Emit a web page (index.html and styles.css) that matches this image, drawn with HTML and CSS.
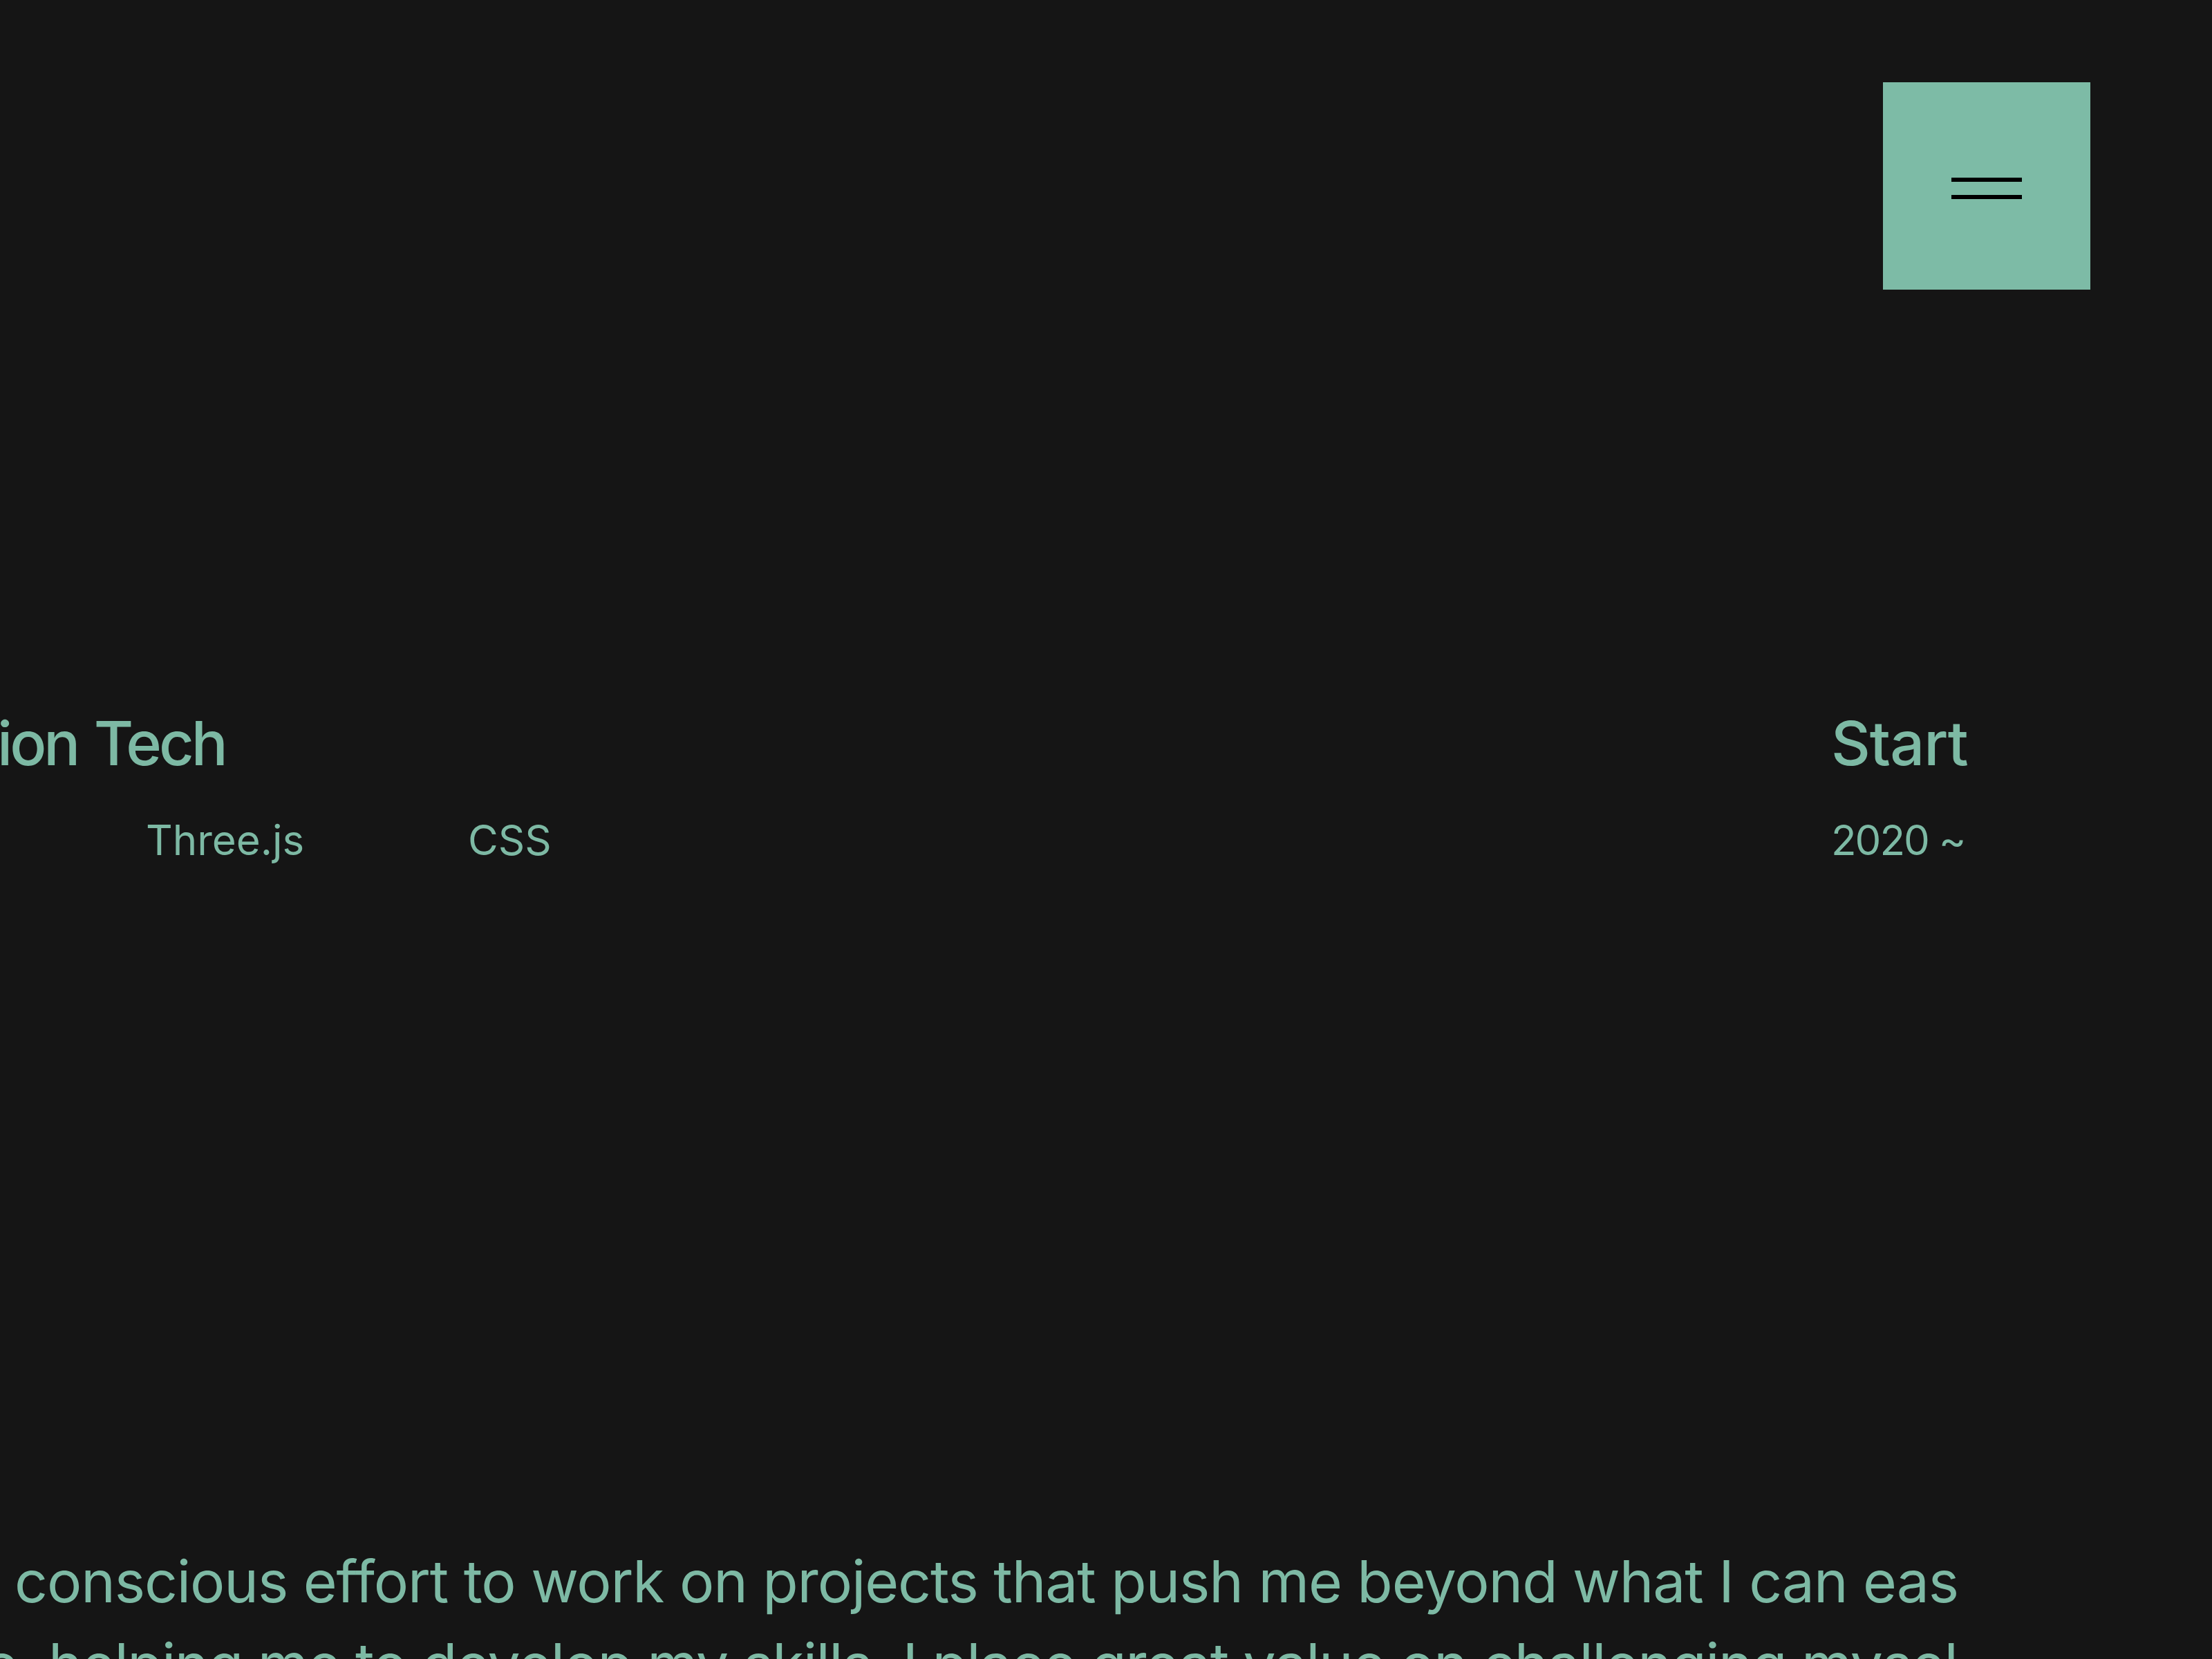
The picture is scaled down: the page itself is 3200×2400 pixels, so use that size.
FILE: index.html
```html
<!DOCTYPE html>
<html lang="en">
<head>
<meta charset="utf-8">
<title>Tech</title>
<link rel="stylesheet" href="styles.css">
</head>
<body>
<header class="topbar">
  <button class="menu-btn" aria-label="Menu">
    <span class="menu-line"></span>
    <span class="menu-line"></span>
  </button>
</header>
<section class="info-row">
  <div class="info-col tech-col">
    <h2 class="info-title">ion Tech</h2>
    <ul class="tech-list">
      <li class="tech-item">Three.js</li>
      <li class="tech-item">CSS</li>
    </ul>
  </div>
  <div class="info-col start-col">
    <h2 class="info-title">Start</h2>
    <p class="info-value">2020 ~</p>
  </div>
</section>
<section class="about">
  <p class="about-line first">conscious effort to work on projects that push me beyond what I can eas</p>
  <p class="about-line second">e, helping me to develop my skills. I place great value on challenging mysel</p>
</section>
</body>
</html>
```
FILE: styles.css
```css
html, body {
  margin: 0;
  padding: 0;
}
body {
  background: #151515;
  color: #7db9a4;
  font-family: Inter, "Liberation Sans", sans-serif;
  width: 3200px;
  height: 2400px;
  overflow: hidden;
}
.topbar {
  display: flex;
  justify-content: flex-end;
  padding: 119px 176px 0 0;
}
.menu-btn {
  width: 300px;
  height: 300px;
  background: #7dbba6;
  border: none;
  padding: 0;
  margin: 0;
  display: flex;
  flex-direction: column;
  align-items: center;
  justify-content: center;
  gap: 19px;
  padding-top: 7px;
}
.menu-line {
  display: block;
  width: 102px;
  height: 6px;
  background: #000;
}
.info-row {
  display: flex;
  justify-content: space-between;
  margin-top: 603px;
  padding-right: 344px;
}
.info-col {
  display: flex;
  flex-direction: column;
}
.info-title {
  margin: 0;
  font-size: 88px;
  line-height: 106px;
  font-weight: 500;
  letter-spacing: -1px;
}
.tech-col .info-title {
  margin-left: -4px;
  letter-spacing: -4px;
  word-spacing: 4px;
}
.tech-list {
  list-style: none;
  margin: 51px 0 0 0;
  padding: 0 0 0 211px;
  display: flex;
}
.tech-item {
  width: 466px;
  font-size: 60px;
  line-height: 72px;
}
.info-value {
  margin: 51px 0 0 0;
  font-size: 60px;
  line-height: 72px;
  letter-spacing: -2px;
}
.start-col {
  width: 207px;
}
.about {
  margin-top: 977px;
  width: 2840px;
  overflow: hidden;
}
.about-line {
  margin: 0;
  white-space: nowrap;
  font-size: 84px;
  line-height: 120px;
  letter-spacing: -1.1px;
}
.about-line.first {
  margin-left: 21px;
}
.about-line.second {
  margin-left: -22px;
  letter-spacing: -1.6px;
}
```
